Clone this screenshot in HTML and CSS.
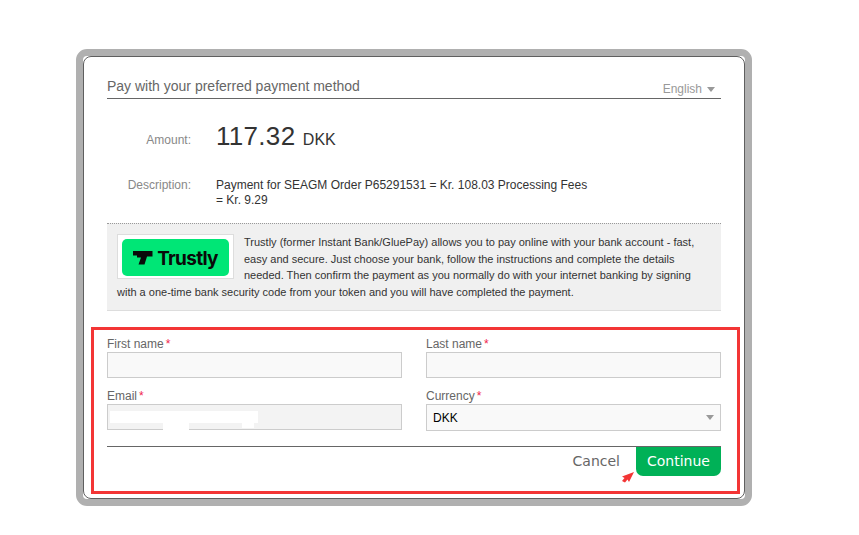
FILE: index.html
```html
<!DOCTYPE html>
<html lang="en">
<head>
<meta charset="utf-8">
<title>Pay with your preferred payment method</title>
<link rel="stylesheet" href="styles.css">
</head>
<body>
<main class="modal">
  <header class="head">
    <h1 class="title">Pay with your preferred payment method</h1>
    <div class="lang">English <span class="caret"></span></div>
  </header>
  <div class="row amount-row">
    <div class="key">Amount:</div>
    <div class="amount"><span class="num">117.32</span> <span class="cur">DKK</span></div>
  </div>
  <div class="row desc-row">
    <div class="key">Description:</div>
    <div class="desc">Payment for SEAGM Order P65291531 = Kr. 108.03 Processing Fees = Kr. 9.29</div>
  </div>
  <section class="info">
    <p class="info-text"><span class="logo-box"><span class="logo"><svg class="logo-mark" viewBox="0 0 20 15" width="20" height="15"><path d="M0 1H19.500V6.500H14L11.500 14.500H5.500L8 7.500H4V5.500H0Z" fill="#0a0a0a"/></svg><span class="logo-text">Trustly</span></span></span>Trustly (former Instant Bank/GluePay) allows you to pay online with your bank account - fast, easy and secure. Just choose your bank, follow the instructions and complete the details needed. Then confirm the payment as you normally do with your internet banking by signing with a one-time bank security code from your token and you will have completed the payment.</p>
  </section>
  <form class="form">
    <div class="grid">
      <div class="field">
        <label class="lbl">First name<span class="req">*</span></label>
        <div class="input"></div>
      </div>
      <div class="field">
        <label class="lbl">Last name<span class="req">*</span></label>
        <div class="input"></div>
      </div>
      <div class="field">
        <label class="lbl">Email<span class="req">*</span></label>
        <div class="input email">
          <span class="mask m1"></span><span class="mask m2"></span><span class="mask m3"></span>
        </div>
      </div>
      <div class="field">
        <label class="lbl">Currency<span class="req">*</span></label>
        <div class="input select">DKK<span class="caret"></span></div>
      </div>
    </div>
    <div class="actions">
      <span class="cancel">Cancel</span>
      <span class="continue">Continue
        <svg class="arrow" viewBox="0 0 12 11" width="12" height="11"><path d="M12 0L7 10L5.500 7.500L3 10.500L0 9L2.500 6L0 4.500Z" fill="#f33535"/></svg>
      </span>
    </div>
  </form>
</main>
</body>
</html>
```
FILE: styles.css
```css
* { box-sizing: border-box; }
html, body { margin: 0; padding: 0; }
body {
  width: 859px;
  height: 535px;
  background: #fff;
  font-family: "Liberation Sans", Arial, sans-serif;
  padding: 49px 0 0 76px;
  overflow: hidden;
}
.modal {
  width: 676px;
  height: 457px;
  background: #fff;
  border: 7px solid #b0b0b0;
  border-radius: 11px;
  padding: 0 24px;
  position: relative;
}
.modal::before {
  content: "";
  position: absolute;
  inset: 0;
  border: 1.500px solid #5f5f5f;
  border-radius: 8px;
  pointer-events: none;
}
.head {
  height: 43px;
  display: flex;
  justify-content: space-between;
  align-items: flex-end;
  border-bottom: 1px solid #666;
  padding-bottom: 4px;
}
.title {
  margin: 0;
  font-size: 14px;
  font-weight: normal;
  color: #666;
  line-height: 16px;
}
.lang {
  font-size: 12px;
  color: #999;
  line-height: 14px;
  padding-right: 5px;
  margin-bottom: -2px;
  margin-right: 1px;
  display: flex;
  align-items: center;
  gap: 5px;
}
.caret {
  display: inline-block;
  width: 0;
  height: 0;
  border-left: 4.500px solid transparent;
  border-right: 4.500px solid transparent;
  border-top: 5px solid #999;
}
.row { display: flex; }
.key {
  width: 84px;
  text-align: right;
  font-size: 12px;
  color: #888;
  margin-right: 25px;
  flex: none;
}
.amount-row { margin-top: 21px; height: 32px; align-items: center; }
.amount-row .key { padding-top: 7px; }
.amount { color: #333; white-space: nowrap; }
.num { font-size: 26px; letter-spacing: 0.300px; }
.cur { font-size: 16px; margin-left: 3px; }
.desc-row { margin-top: 26px; }
.desc-row .key { line-height: 15px; }
.desc { width: 378px; font-size: 12px; line-height: 15px; color: #333; }
.info {
  margin-top: 15px;
  height: 88px;
  background: #f0f0f0;
  border-top: 1px dotted #999;
  border-bottom: 1px solid #ddd;
  padding: 10px 10px 0;
  display: flow-root;
}
.logo-box {
  display: block;
  float: left;
  width: 117px;
  height: 45px;
  background: #fff;
  border: 1px solid #ddd;
  padding: 4px;
  margin-right: 10px;
}
.logo {
  width: 107px;
  height: 37px;
  background: #00e676;
  border-radius: 5px;
  display: flex;
  align-items: center;
  justify-content: center;
  gap: 4px;
}
.logo-mark { flex: none; }
.logo-text {
  font-family: Inter, "Liberation Sans", sans-serif;
  font-size: 19px;
  font-weight: 700;
  letter-spacing: -0.700px;
  color: #0a0a0a;
  margin-top: 4px;
}
.info-text {
  margin: 0;
  font-size: 11px;
  line-height: 16.700px;
  color: #333;
}
.form {
  margin: 16px -19px 0 -16px;
  height: 167px;
  border: 3px solid #f33535;
  padding: 7px 13px 0;
}
.grid {
  display: grid;
  grid-template-columns: 295px 295px;
  column-gap: 24px;
  row-gap: 11px;
}
.lbl {
  display: block;
  font-size: 12px;
  line-height: 14px;
  color: #666;
  margin-bottom: 1px;
}
.req { color: #f0244e; margin-left: 2px; }
.input {
  height: 26px;
  background: #f9f9f9;
  border: 1px solid #ccc;
  position: relative;
}
.email { background: #f3f3f3; }
.mask { position: absolute; background: #fff; }
.m1 { left: 2px; top: 6px; width: 148px; height: 12px; }
.m2 { left: 55px; top: 18px; width: 26px; height: 7px; }
.m3 { left: 134px; top: 18px; width: 12px; height: 5px; }
.select {
  height: 27px;
  display: flex;
  align-items: center;
  justify-content: space-between;
  padding: 0 6px;
  font-size: 12px;
  color: #000;
  background: #f9f9f9;
}
.actions {
  margin-top: 15px;
  border-top: 1px solid #666;
  display: flex;
  justify-content: flex-end;
  align-items: flex-start;
  width: 614px;
}
.cancel {
  font-family: "DejaVu Sans", Verdana, sans-serif;
  font-size: 14px;
  line-height: 29px;
  color: #666;
  margin-right: 16px;
}
.continue {
  position: relative;
  width: 85px;
  height: 29px;
  background: #00b157;
  border-radius: 0 0 7px 7px;
  color: #fff;
  font-family: "DejaVu Sans", Verdana, sans-serif;
  font-size: 14px;
  line-height: 29px;
  text-align: center;
}
.arrow { position: absolute; left: -14px; top: 25px; }
```
